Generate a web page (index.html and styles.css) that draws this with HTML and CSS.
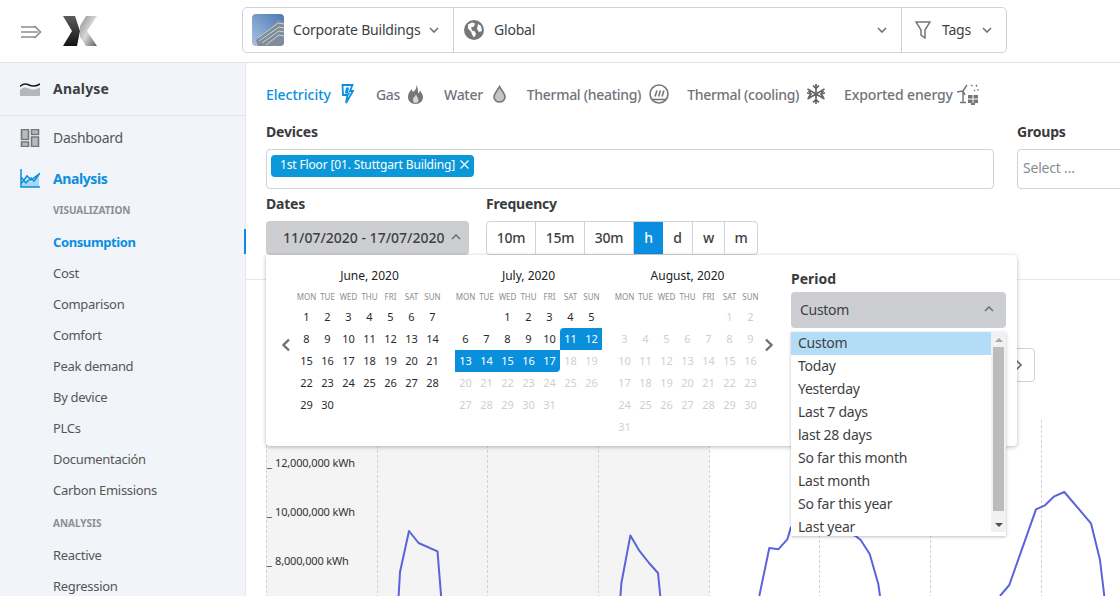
FILE: index.html
```html
<!DOCTYPE html>
<html lang="en">
<head>
    <meta charset="UTF-8">
    <title>Analysis - Consumption</title>
    <link rel="stylesheet" href="styles.css">
</head>
<body>
    <!-- Top bar -->
    <header class="topbar">
        <div class="brand">
            <svg class="menu-toggle" width="22" height="14" viewBox="0 0 22 14">
                <path d="M1 2h14M1 7h17M1 12h14" stroke="#8c8c90" stroke-width="1.7" fill="none"/>
                <path d="M14.500 1l6 6-6 6" stroke="#8c8c90" stroke-width="1.7" fill="none"/>
            </svg>
            <svg class="logo" width="34" height="31" viewBox="0 0 34 31">
                <defs>
                    <linearGradient id="logo-left" x1="0" y1="0" x2="0" y2="1">
                        <stop offset="0" stop-color="#5c5c5e"/>
                        <stop offset="1" stop-color="#131314"/>
                    </linearGradient>
                    <linearGradient id="logo-right" x1="0" y1="0" x2="1" y2="1">
                        <stop offset="0" stop-color="#8b8b8b"/>
                        <stop offset="0.5" stop-color="#d8d8d8"/>
                        <stop offset="1" stop-color="#5c5c5c"/>
                    </linearGradient>
                </defs>
                <path d="M0 0h12l5 15-3 15H0l9-15z" fill="url(#logo-left)"/>
                <path d="M34 0H23l-6 10v11l6 9h11l-10-15z" fill="url(#logo-right)"/>
            </svg>
        </div>
        <div class="scope-bar">
            <div class="scope scope-org">
                <svg class="thumb" width="32" height="32" viewBox="0 0 32 32">
                    <defs>
                        <linearGradient id="sky" x1="1" y1="0" x2="0" y2="1">
                            <stop offset="0" stop-color="#4a78b8"/>
                            <stop offset="1" stop-color="#a9c2de"/>
                        </linearGradient>
                    </defs>
                    <rect width="32" height="32" rx="4" fill="url(#sky)"/>
                    <path d="M4 26L26 6l6 2v20a4 4 0 0 1-4 4H6z" fill="#7f8d9a"/>
                    <path d="M6 24L26 9l6 1M7 27L27 13l5 1M10 29l17-12 5 1M14 31l13-10 5 1" stroke="#c9d2da" stroke-width="1" fill="none"/>
                </svg>
                <span>Corporate Buildings</span>
                <svg class="caret" width="10" height="6" viewBox="0 0 10 6"><path d="M1 1l4 4 4-4"/></svg>
            </div>
            <div class="scope scope-region">
                <svg width="20" height="20" viewBox="0 0 20 20">
                    <circle cx="10" cy="10" r="10" fill="#77777b"/>
                    <path d="M4 4.500l4-2 3 1-1 3-3 1 1 3 3 1 1 3-2 3-2-3-1-3-3-3zM14 4l3 2 1 5-3 1-2-3z" fill="#fff"/>
                </svg>
                <span>Global</span>
                <svg class="caret caret-end" width="10" height="6" viewBox="0 0 10 6"><path d="M1 1l4 4 4-4"/></svg>
            </div>
            <div class="scope scope-tags">
                <svg width="16" height="18" viewBox="0 0 16 18">
                    <path d="M1 1h14l-5 8v8l-4-3V9z" fill="none" stroke="#77777b" stroke-width="1.500"/>
                </svg>
                <span>Tags</span>
                <svg class="caret" width="10" height="6" viewBox="0 0 10 6"><path d="M1 1l4 4 4-4"/></svg>
            </div>
        </div>
    </header>

    <div class="layout">
        <!-- Sidebar -->
        <nav class="sidebar">
            <div class="nav-module">
                <svg width="20" height="14" viewBox="0 0 20 14">
                    <path d="M0 8c3-3 6-3 9-1.500s6 1.500 11-1V14H0z" fill="#b4b8bb"/>
                    <path d="M0 4.500c3-3 6-3 9-1.500s6 2 11-1" stroke="#1c1c1e" stroke-width="1.600" fill="none"/>
                </svg>
                <span>Analyse</span>
            </div>
            <a class="nav-main">
                <svg width="18" height="18" viewBox="0 0 18 18">
                    <path d="M.5.5h7v10h-7zM10.500.5h7v5h-7zM.5 13h7v4.500h-7zM10.500 8h7v9.500h-7z" fill="#b9bbbe" stroke="#77777b" stroke-width="1.600"/>
                </svg>
                <span>Dashboard</span>
            </a>
            <a class="nav-main active">
                <svg width="20" height="19" viewBox="0 0 20 19">
                    <path d="M1 17l6-7 4 3 8-7v12H1z" fill="#a6d6f4"/>
                    <path d="M1 0v18h19M1 8l5 6 5-5 3 3 6-8M1 15l6-8 4 4 8-6" stroke="#0a8fe0" stroke-width="1.500" fill="none"/>
                </svg>
                <span>Analysis</span>
            </a>
            <div class="nav-head">VISUALIZATION</div>
            <a class="nav-sub current">Consumption</a>
            <a class="nav-sub">Cost</a>
            <a class="nav-sub">Comparison</a>
            <a class="nav-sub">Comfort</a>
            <a class="nav-sub">Peak demand</a>
            <a class="nav-sub">By device</a>
            <a class="nav-sub">PLCs</a>
            <a class="nav-sub">Documentación</a>
            <a class="nav-sub">Carbon Emissions</a>
            <div class="nav-head nav-head-next">ANALYSIS</div>
            <a class="nav-sub">Reactive</a>
            <a class="nav-sub">Regression</a>
        </nav>

        <!-- Main content -->
        <main class="main-content">
            <div class="filters">
                <div class="tabs">
                    <a class="tab tab-electricity active">Electricity
                        <svg width="13" height="20" viewBox="0 0 13 20">
                            <path d="M1.500 1h10l-2.500 6h3L5 19l1.500-8H2z" fill="#fff" stroke="#0a8fe0" stroke-width="1.800"/>
                            <path d="M5 3.500l-1 6h3l-.5 3 3-4H7l1-5z" fill="#0a8fe0"/>
                        </svg>
                    </a>
                    <a class="tab tab-gas">Gas
                        <svg width="15" height="19" viewBox="0 0 15 19">
                            <path d="M8 0c1 4-1 5-3 7-1-1-1-2-1-3C1 7 0 9 0 12c0 4 3 7 7.500 7S15 16 15 12c0-3-2-4-3-7 0 2-1 3-2 3 0-3 0-6-2-8z" fill="#77777b"/>
                            <path d="M8 9c0 2-3 3-3 6 0 2 1 3 2.500 3s3-1 3-3c0-2-2-3-2.500-6z" fill="#d5d6d8"/>
                        </svg>
                    </a>
                    <a class="tab tab-water">Water
                        <svg width="13" height="18" viewBox="0 0 13 18">
                            <path d="M6.500 1.500C5 5 1 8.500 1 12a5.500 5 0 0 0 11 0C12 8.500 8 5 6.500 1.500z" fill="#c3c5c7" stroke="#77777b" stroke-width="1.600"/>
                        </svg>
                    </a>
                    <a class="tab tab-heating">Thermal (heating)
                        <svg width="20" height="20" viewBox="0 0 20 20">
                            <circle cx="10" cy="10" r="9" fill="none" stroke="#77777b" stroke-width="1.600"/>
                            <path d="M6 12.500l2-6M9.500 12.500l2-6M13 12.500l2-6" stroke="#77777b" stroke-width="1.600"/>
                            <path d="M3 15.500h14" stroke="#77777b" stroke-width="1.600"/>
                        </svg>
                    </a>
                    <a class="tab tab-cooling">Thermal (cooling)
                        <svg width="20" height="20" viewBox="0 0 20 20">
                            <path d="M10 0v20M1.500 5l17 10M18.500 5l-17 10M7 1.500l3 3 3-3M7 18.500l3-3 3 3M1 9l4 1-2.500 3.500M19 9l-4 1 2.500 3.500M2.500 6.500L5 10M17.500 6.500L15 10" stroke="#66666a" stroke-width="1.700" fill="none"/>
                        </svg>
                    </a>
                    <a class="tab tab-export">Exported energy
                        <svg width="24" height="21" viewBox="0 0 24 21">
                            <path d="M7 7v11M4 18.500h6M7 7l4-6M7 7L1 8M7 7l2 4" stroke="#77777b" stroke-width="1.500" fill="none"/>
                            <path d="M12 11h10v8h-10zM15 19h4v2h-4z" fill="#77777b"/>
                            <path d="M12 15h10M17 11v8" stroke="#fff" stroke-width="1"/>
                            <path d="M15 1l1.500 1M20 1l1 1.500M22 5v1.500M18 6l1 1" stroke="#77777b" stroke-width="1.400"/>
                        </svg>
                    </a>
                </div>

                <div class="device-row">
                    <div class="form-group">
                        <label>Devices</label>
                        <div class="field">
                            <span class="chip">1st Floor [01. Stuttgart Building]
                                <svg width="9" height="9" viewBox="0 0 9 9"><path d="M.5.5l8 8M8.500.5l-8 8" stroke="#fff" stroke-width="1.100"/></svg>
                            </span>
                        </div>
                    </div>
                    <div class="form-group">
                        <label>Groups</label>
                        <div class="field placeholder">Select ...</div>
                    </div>
                </div>

                <div class="date-row">
                    <div class="form-group">
                        <label>Dates</label>
                        <div class="date-btn">11/07/2020 - 17/07/2020
                            <svg class="caret" width="10" height="6" viewBox="0 0 10 6"><path d="M1 5l4-4 4 4"/></svg>
                        </div>
                    </div>
                    <div class="form-group">
                        <label>Frequency</label>
                        <div class="freq">
                            <span class="f-10m">10m</span>
                            <span class="f-15m">15m</span>
                            <span class="f-30m">30m</span>
                            <span class="f-h on">h</span>
                            <span class="f-d">d</span>
                            <span class="f-w">w</span>
                            <span class="f-m">m</span>
                        </div>
                    </div>

                    <!-- Date range popover -->
                    <div class="popover">
                        <div class="calendars">
                            <svg class="month-nav" width="10" height="14" viewBox="0 0 10 14"><path d="M8 1.500L2.500 7 8 12.500"/></svg>
                            <div class="month">
                                <h4>June, 2020</h4>
                                <div class="weekdays"><span>MON</span><span>TUE</span><span>WED</span><span>THU</span><span>FRI</span><span>SAT</span><span>SUN</span></div>
                                <div class="days">
                                    <span>1</span><span>2</span><span>3</span><span>4</span><span>5</span><span>6</span><span>7</span>
                                    <span>8</span><span>9</span><span>10</span><span>11</span><span>12</span><span>13</span><span>14</span>
                                    <span>15</span><span>16</span><span>17</span><span>18</span><span>19</span><span>20</span><span>21</span>
                                    <span>22</span><span>23</span><span>24</span><span>25</span><span>26</span><span>27</span><span>28</span>
                                    <span>29</span><span>30</span>
                                </div>
                            </div>
                            <div class="month">
                                <h4>July, 2020</h4>
                                <div class="weekdays"><span>MON</span><span>TUE</span><span>WED</span><span>THU</span><span>FRI</span><span>SAT</span><span>SUN</span></div>
                                <div class="days">
                                    <span></span><span></span><span>1</span><span>2</span><span>3</span><span>4</span><span>5</span>
                                    <span>6</span><span>7</span><span>8</span><span>9</span><span>10</span><span class="sel sel-start">11</span><span class="sel">12</span>
                                    <span class="sel">13</span><span class="sel">14</span><span class="sel">15</span><span class="sel">16</span><span class="sel sel-end">17</span><span class="off">18</span><span class="off">19</span>
                                    <span class="off">20</span><span class="off">21</span><span class="off">22</span><span class="off">23</span><span class="off">24</span><span class="off">25</span><span class="off">26</span>
                                    <span class="off">27</span><span class="off">28</span><span class="off">29</span><span class="off">30</span><span class="off">31</span>
                                </div>
                            </div>
                            <div class="month">
                                <h4>August, 2020</h4>
                                <div class="weekdays"><span>MON</span><span>TUE</span><span>WED</span><span>THU</span><span>FRI</span><span>SAT</span><span>SUN</span></div>
                                <div class="days all-off">
                                    <span></span><span></span><span></span><span></span><span></span><span>1</span><span>2</span>
                                    <span>3</span><span>4</span><span>5</span><span>6</span><span>7</span><span>8</span><span>9</span>
                                    <span>10</span><span>11</span><span>12</span><span>13</span><span>14</span><span>15</span><span>16</span>
                                    <span>17</span><span>18</span><span>19</span><span>20</span><span>21</span><span>22</span><span>23</span>
                                    <span>24</span><span>25</span><span>26</span><span>27</span><span>28</span><span>29</span><span>30</span>
                                    <span>31</span>
                                </div>
                            </div>
                            <svg class="month-nav" width="10" height="14" viewBox="0 0 10 14"><path d="M2 1.500L7.500 7 2 12.500"/></svg>
                        </div>
                        <div class="period">
                            <label>Period</label>
                            <div class="period-btn">Custom
                                <svg class="caret" width="10" height="6" viewBox="0 0 10 6"><path d="M1 5l4-4 4 4"/></svg>
                            </div>
                            <div class="period-list">
                                <ul>
                                    <li class="on">Custom</li>
                                    <li>Today</li>
                                    <li>Yesterday</li>
                                    <li>Last 7 days</li>
                                    <li>last 28 days</li>
                                    <li>So far this month</li>
                                    <li>Last month</li>
                                    <li>So far this year</li>
                                    <li>Last year</li>
                                </ul>
                                <div class="scrollbar">
                                    <i class="arrow-up"></i>
                                    <div class="thumb-bar"></div>
                                    <i class="arrow-down"></i>
                                </div>
                            </div>
                        </div>
                    </div>
                </div>
            </div>

            <div class="chart-tools">
                <div class="pager">
                    <svg class="caret" width="7" height="12" viewBox="0 0 7 12"><path d="M1 1l5 5-5 5"/></svg>
                </div>
            </div>

            <!-- Consumption chart -->
            <svg class="chart" width="874" height="176" viewBox="246 420 874 176">
                <rect x="266" y="420" width="443" height="176" fill="#f4f4f4"/>
                <path d="M266.500 420v176M377.500 420v176M487.500 420v176M598.500 420v176M709.500 420v176M819.500 420v176M930.500 420v176M1041.500 420v176" stroke="#d2d2d2" stroke-dasharray="3 2" fill="none"/>
                <g class="chart-labels">
                    <text x="267" y="467">_</text><text x="275" y="467">12,000,000 kWh</text>
                    <text x="267" y="516">_</text><text x="275" y="516">10,000,000 kWh</text>
                    <text x="267" y="565">_</text><text x="275" y="565">8,000,000 kWh</text>
                </g>
                <g fill="none" stroke="#5b63dc" stroke-width="2" stroke-linejoin="round">
                    <path d="M398 607l2-35 9-41 9.600 12 18.900 8.400 4.500 55.600"/>
                    <path d="M619.600 607l1.800-24 9-47.600 8.900 15.300 9.700 12.300 9 10 3.400 34"/>
                    <path d="M759.300 596l10-48 9 1.300 9-10 3.400-11.300 10-15 55 23 5 4 9 14 8.600 30 1.700 12"/>
                    <path d="M1000 596l9.300-11 26.700-75.700 9-4 9.300-9 10-4.300 26.700 31.300 9 36.700 4.300 36"/>
                </g>
            </svg>
        </main>
    </div>
</body>
</html>
```

FILE: styles.css
```css
* {
    box-sizing: border-box;
}

body {
    font-family: "Noto Sans", sans-serif;
    font-size: 14px;
    letter-spacing: -0.2px;
    margin: 0;
    padding: 0;
    width: 1120px;
    height: 596px;
    overflow: hidden;
    background-color: #fff;
    color: #3f3f42;
}

svg {
    display: block;
    flex: none;
}

.caret {
    fill: none;
    stroke: #6f7175;
    stroke-width: 1.6;
}

/* Top bar */
.topbar {
    height: 63px;
    display: flex;
    align-items: center;
    border-bottom: 1px solid #e0e2e5;
    padding-left: 20px;
}

.brand {
    width: 222px;
    display: flex;
    align-items: center;
    gap: 21px;
    margin-top: 1px;
}

.scope-bar {
    width: 765px;
    height: 46px;
    display: flex;
    border: 1px solid #cfd2d6;
    border-radius: 5px;
    margin-top: -2px;
}

.scope {
    display: flex;
    align-items: center;
    padding: 0 9px;
    color: #3c3f44;
}

.scope span {
    margin-bottom: 2px;
}

.scope-org {
    width: 211px;
    border-right: 1px solid #cfd2d6;
}

.scope-org span {
    margin-left: 9px;
    margin-right: 8px;
}

.scope-region {
    width: 448px;
    border-right: 1px solid #cfd2d6;
    padding: 0 14px 0 10px;
}

.scope-region span {
    margin-left: 10px;
    flex: 1;
}

.scope-tags {
    flex: 1;
    padding-left: 13px;
}

.scope-tags span {
    margin-left: 11px;
    margin-right: 11px;
}

/* Sidebar */
.layout {
    display: flex;
    height: 533px;
}

.sidebar {
    width: 246px;
    flex: none;
    background-color: #f1f4f8;
    border-right: 1px solid #e6e8ea;
    color: #56565a;
}

.sidebar a {
    display: flex;
    align-items: center;
}

.nav-module {
    height: 53px;
    display: flex;
    align-items: center;
    gap: 13px;
    padding-left: 20px;
    padding-bottom: 1px;
    border-bottom: 1px solid #e4e7ea;
    font-weight: 700;
    letter-spacing: 0.2px;
    color: #3f3f42;
}

.nav-main {
    height: 41px;
    gap: 13px;
    padding-left: 20px;
    letter-spacing: -0.3px;
}

.nav-main svg {
    width: 20px;
}

.nav-main.active {
    color: #0a8fe0;
    font-weight: 700;
    letter-spacing: -0.4px;
}

.nav-main:first-of-type {
    margin-top: 1px;
}

.nav-head {
    height: 22px;
    margin-bottom: 5px;
    padding-left: 53px;
    line-height: 22px;
    font-size: 10px;
    font-weight: 700;
    letter-spacing: 0;
    color: #8d8f93;
}

.nav-head-next {
    margin-top: 7px;
}

.nav-sub {
    height: 31px;
    padding-left: 53px;
    font-size: 13px;
    letter-spacing: -0.3px;
}

.nav-sub.current {
    position: relative;
    color: #0a8fe0;
    font-weight: 700;
    letter-spacing: -0.4px;
}

.nav-sub.current::after {
    content: "";
    position: absolute;
    right: -1px;
    top: 3px;
    width: 2px;
    height: 25px;
    background-color: #0a8fe0;
}

/* Filters */
.main-content {
    flex: 1;
    min-width: 0;
}

.filters {
    height: 217px;
    padding: 11px 0 0 20px;
    border-bottom: 1px solid #e6e8ea;
}

.tabs {
    display: flex;
    height: 40px;
    align-items: center;
    color: #6f747c;
    letter-spacing: -0.3px;
}

.tab {
    display: flex;
    align-items: center;
    margin-right: 22px;
    font-weight: 500;
}

.tab.active {
    color: #0a8fe0;
    letter-spacing: 0;
}

.tab-electricity { gap: 10px; }
.tab-gas { gap: 8px; margin-right: 21px; }
.tab-water { gap: 10px; margin-right: 21px; }
.tab-heating { gap: 8px; margin-right: 18px; }
.tab-cooling { gap: 7px; margin-right: 18px; }
.tab-export { gap: 3px; letter-spacing: -0.15px; }

.form-group label,
.period label {
    display: block;
    font-weight: 700;
    color: #3a3a3d;
    line-height: 20px;
}

.device-row {
    display: grid;
    grid-template-columns: 728px 200px;
    gap: 23px;
    margin-top: 8px;
}

.device-row label {
    margin-bottom: 7px;
}

.field {
    height: 40px;
    border: 1px solid #cfd2d6;
    border-radius: 4px;
    padding: 4px;
}

.placeholder {
    padding: 0 5px;
    line-height: 36px;
    color: #8b8d91;
}

.chip {
    display: inline-flex;
    align-items: center;
    gap: 5px;
    height: 22px;
    padding: 0 5px 2px 9px;
    border-radius: 4px;
    background-color: #0b98d8;
    color: #fff;
    font-size: 12px;
    letter-spacing: -0.15px;
}

.date-row {
    display: flex;
    gap: 17px;
    margin-top: 5px;
    position: relative;
}

.date-row .form-group label {
    margin-bottom: 7px;
}

.date-btn {
    width: 203px;
    height: 34px;
    background-color: #ccced1;
    border-radius: 4px;
    display: flex;
    align-items: center;
    justify-content: space-between;
    padding: 0 8px 2px 17px;
    font-weight: 500;
    letter-spacing: 0;
}

.freq {
    display: flex;
    width: 272px;
    height: 34px;
    border: 1px solid #cfd2d6;
    border-radius: 4px;
    overflow: hidden;
    font-weight: 500;
}

.freq span {
    display: flex;
    align-items: center;
    justify-content: center;
    border-right: 1px solid #cfd2d6;
    padding-bottom: 1px;
}

.freq span:last-child {
    border-right: none;
}

.f-10m { width: 49px; }
.f-15m { width: 49px; }
.f-30m { width: 49px; }
.f-h { width: 29px; }
.f-d { width: 30px; }
.f-w { width: 32px; }
.f-m { flex: 1; }

.freq .on {
    background-color: #0a8fe0;
    color: #fff;
    border-right: none;
}

/* Date range popover */
.popover {
    position: absolute;
    left: 0;
    top: 61px;
    width: 751px;
    height: 191px;
    z-index: 2;
    background-color: #fff;
    border-radius: 0 4px 4px 4px;
    box-shadow: 0 1px 4px rgba(0,0,0,0.28);
    display: flex;
    letter-spacing: 0;
}

.calendars {
    width: 525px;
    display: flex;
    align-items: center;
    padding-left: 15px;
}

.month-nav {
    fill: none;
    stroke: #6f7175;
    stroke-width: 2.4;
    margin-top: -12px;
}

.month {
    width: 147px;
    margin-right: 12px;
    align-self: flex-start;
}

.month-nav:first-child {
    margin-right: 5px;
}

.month:nth-of-type(3) {
    margin-right: 3px;
}

.month h4 {
    margin: 0;
    padding-top: 12px;
    height: 31px;
    line-height: 18px;
    text-align: center;
    font-size: 12px;
    font-weight: 400;
    color: #222;
}

.weekdays,
.days {
    display: grid;
    grid-template-columns: repeat(7, 21px);
}

.weekdays {
    height: 20px;
    line-height: 21px;
    text-align: center;
    font-size: 8px;
    color: #8b8d91;
}

.days span {
    height: 22px;
    line-height: 22px;
    text-align: center;
    font-size: 11px;
    color: #2a2a2c;
}

.days .off,
.all-off span {
    color: #cfcfcf;
}

.days .sel {
    background-color: #0a8fdc;
    color: #fff;
}

.days .sel-start {
    border-top-left-radius: 4px;
}

.days .sel-end {
    border-bottom-right-radius: 4px;
}

.period {
    width: 215px;
    padding-top: 14px;
}

.period-btn {
    height: 36px;
    margin-top: 3px;
    background-color: #ccced1;
    border-radius: 4px;
    display: flex;
    align-items: center;
    justify-content: space-between;
    padding: 0 12px 2px 9px;
    letter-spacing: -0.3px;
}

.period-list {
    position: relative;
    height: 204px;
    margin-top: 4px;
    background-color: #fff;
    box-shadow: 0 1px 3px rgba(0,0,0,0.25);
    display: flex;
    overflow: hidden;
    letter-spacing: -0.25px;
}

.period-list ul {
    list-style: none;
    margin: 0;
    padding: 0;
    width: 200px;
}

.period-list li {
    height: 23px;
    line-height: 21px;
    padding-left: 7px;
}

.period-list li.on {
    background-color: #b3dcf6;
}

.scrollbar {
    flex: 1;
    height: 200px;
    background-color: #f1f1f1;
    padding: 0 2px;
    display: flex;
    flex-direction: column;
    align-items: center;
}

.thumb-bar {
    width: 11px;
    height: 164px;
    background-color: #bcbcbc;
}

.arrow-up,
.arrow-down {
    display: block;
    width: 0;
    height: 0;
    border-left: 4px solid transparent;
    border-right: 4px solid transparent;
}

.arrow-up {
    border-bottom: 4px solid #a8a8a8;
    margin: 6px 0 5px;
}

.arrow-down {
    border-top: 4px solid #505050;
    margin-top: 12px;
}

/* Chart */
.chart-tools {
    height: 140px;
    padding: 68px 85px 0 0;
    display: flex;
    justify-content: flex-end;
}

.pager {
    width: 34px;
    height: 34px;
    border: 1px solid #cfd2d6;
    border-radius: 0 4px 4px 0;
    display: flex;
    align-items: center;
    justify-content: center;
}

.chart-labels {
    font-size: 11px;
    letter-spacing: -0.15px;
    fill: #333;
}
```
